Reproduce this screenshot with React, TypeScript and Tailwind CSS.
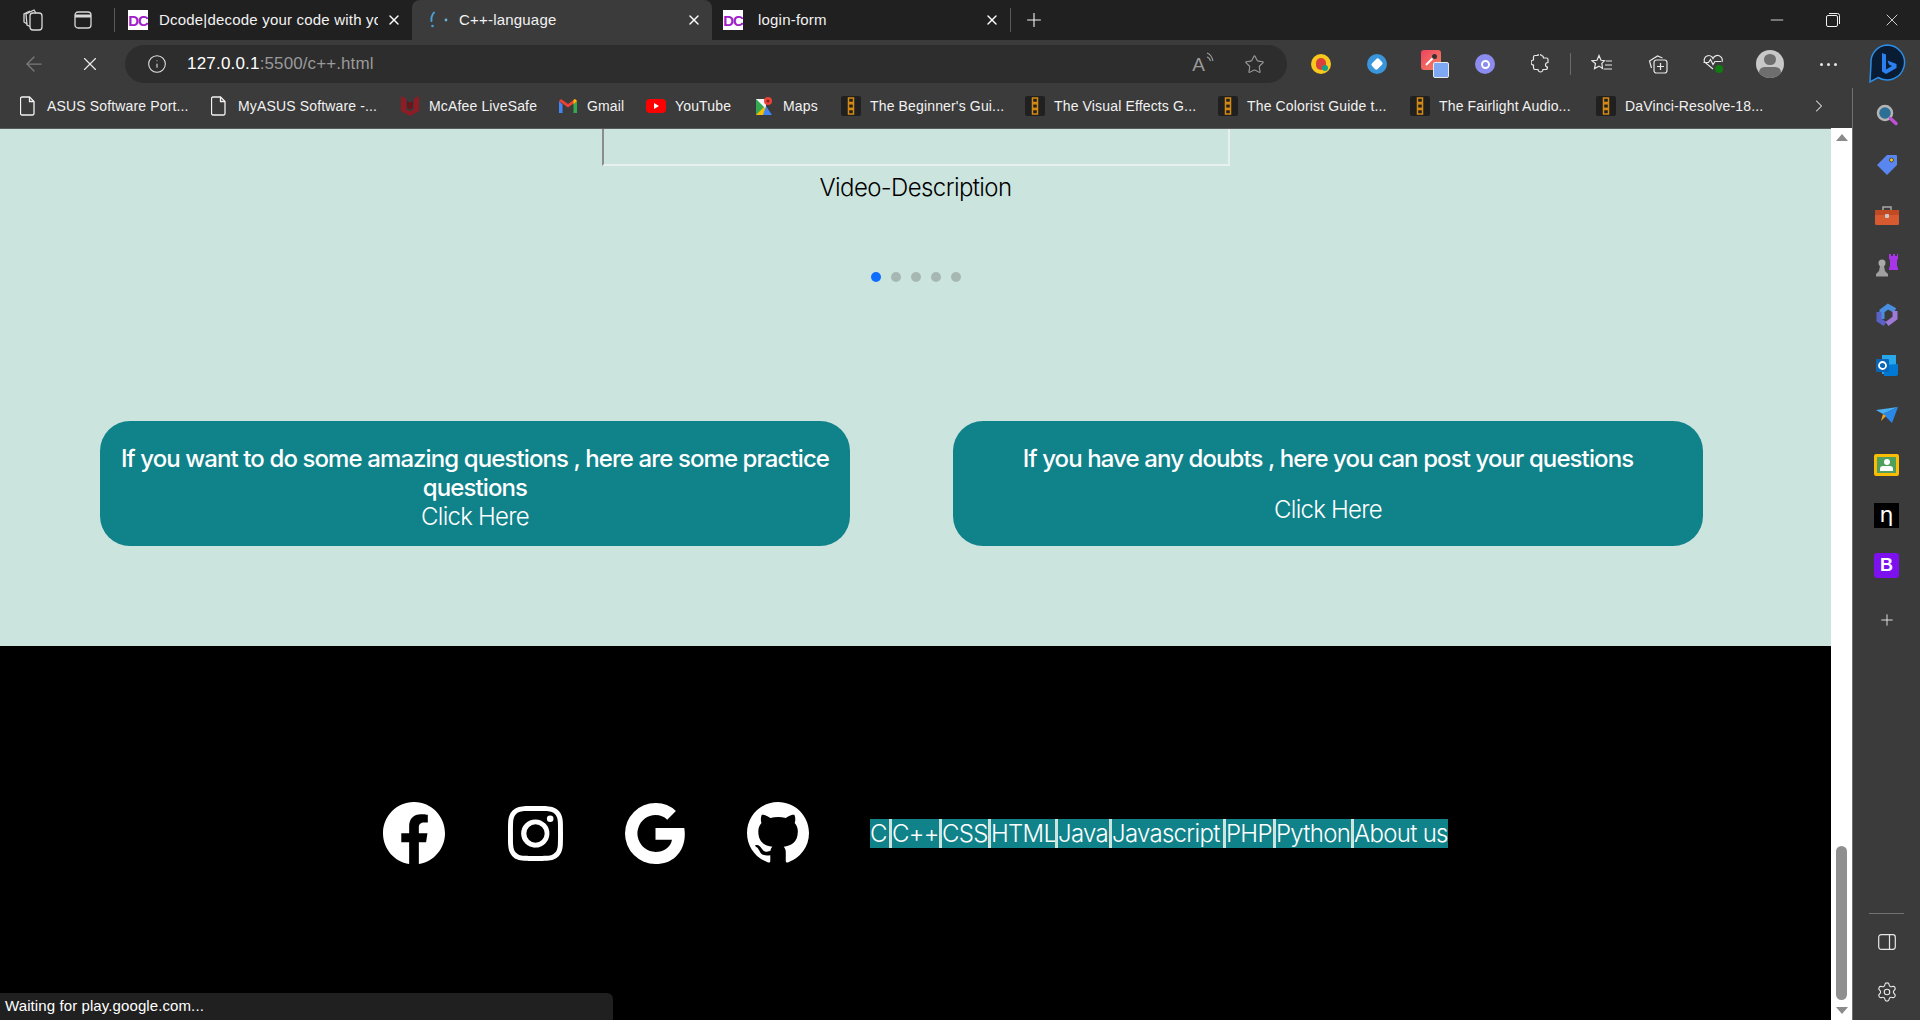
import React from 'react';
import { ArrowLeft, Info, Minus, Plus, Settings, Star, X, ChevronRight } from 'lucide-react';
import { BsFacebook, BsGithub, BsGoogle, BsInstagram } from 'react-icons/bs';

const uiFont = "font-['Liberation_Sans',Arial,sans-serif]";
const pageFont = "font-['Inter',sans-serif]";

const DcIcon = () => (
  <div className="w-5 h-5 bg-white flex items-center justify-center overflow-hidden shrink-0">
    <span className="text-[#a020c8] text-[15px] font-bold leading-none tracking-[-1px]">DC</span>
  </div>
);

const SpinnerIcon = () => (
  <svg width="20" height="20" viewBox="0 0 20 20" className="shrink-0">
    <path d="M6 2.500 C4 5 3 8 3.500 11" stroke="#4a9fd4" strokeWidth="2" fill="none" strokeLinecap="round" />
    <circle cx="4.500" cy="16" r="1.300" fill="#4a9fd4" />
    <circle cx="18" cy="10" r="1.400" fill="#6cb2dc" />
  </svg>
);

const DocIcon = () => (
  <svg width="16" height="20" viewBox="0 0 16 20" fill="none" stroke="#f2f2f2" strokeWidth="1.300">
    <path d="M2 1h7.500l4.500 4.500v12a1.500 1.500 0 0 1-1.500 1.500h-10.500a1.500 1.500 0 0 1-1.500-1.500v-15a1.500 1.500 0 0 1 1.500-1.500z" />
    <path d="M9.500 1v4.500h4.500" />
  </svg>
);

const McafeeIcon = () => (
  <svg width="20" height="22" viewBox="0 0 20 22">
    <path d="M1 1l5 2.500v11l4 2 4-2v-11l5-2.500v15l-9 5-9-5z" fill="#8e1c24" />
    <path d="M7 6l3 1.500 3-1.500v7l-3 1.500-3-1.500z" fill="#6a141b" />
  </svg>
);

const GmailIcon = () => (
  <svg width="20" height="16" viewBox="0 0 20 16">
    <path d="M1 3v12h3.500V6.500z" fill="#4285f4" />
    <path d="M19 3v12h-3.500V6.500z" fill="#34a853" />
    <path d="M1 3l9 6.500L19 3l-2-2-7 5-7-5z" fill="#ea4335" />
    <path d="M15.500 6.500L19 3l-2-2-1.500 1z" fill="#fbbc04" />
  </svg>
);

const YoutubeIcon = () => (
  <svg width="20" height="14" viewBox="0 0 20 14">
    <rect width="20" height="14" rx="4" fill="#f00" />
    <path d="M8 4l5 3-5 3z" fill="#fff" />
  </svg>
);

const MapsIcon = () => (
  <svg width="18" height="20" viewBox="0 0 18 20">
    <path d="M1 3h10v16H1z" fill="#34a853" />
    <path d="M1 19L11 9v10z" fill="#fbbc04" />
    <path d="M1 3l10 10V3z" fill="#f4f4f4" />
    <path d="M11 10l6 9H8z" fill="#4285f4" />
    <circle cx="13" cy="5" r="4" fill="#ea4335" />
    <circle cx="13" cy="5" r="1.500" fill="#8e1c24" />
  </svg>
);

const ResolveIcon = () => (
  <svg width="20" height="20" viewBox="0 0 20 20" className="shrink-0">
    <rect width="20" height="20" rx="2" fill="#202020" />
    <g fill="none" stroke="#d58a14" strokeWidth="1.500">
      <rect x="7.500" y="2" width="5" height="4.500" />
      <rect x="7.500" y="7.800" width="5" height="4.500" />
      <rect x="7.500" y="13.500" width="5" height="4.500" />
    </g>
  </svg>
);

const bookmarks = [
  { label: 'ASUS Software Port...', icon: <DocIcon />, box: 'w-[191px]' },
  { label: 'MyASUS Software -...', icon: <DocIcon />, box: 'w-[191px]' },
  { label: 'McAfee LiveSafe', icon: <McafeeIcon />, box: 'w-[158px]' },
  { label: 'Gmail', icon: <GmailIcon />, box: 'w-[88px]' },
  { label: 'YouTube', icon: <YoutubeIcon />, box: 'w-[108px]' },
  { label: 'Maps', icon: <MapsIcon />, box: 'w-[87px]' },
  { label: "The Beginner's Gui...", icon: <ResolveIcon />, box: 'w-[184px]' },
  { label: 'The Visual Effects G...', icon: <ResolveIcon />, box: 'w-[193px]' },
  { label: 'The Colorist Guide t...', icon: <ResolveIcon />, box: 'w-[192px]' },
  { label: 'The Fairlight Audio...', icon: <ResolveIcon />, box: 'w-[186px]' },
  { label: 'DaVinci-Resolve-18...', icon: <ResolveIcon />, box: 'w-[213px]' },
];

const footerLinks = [
  { label: 'C', box: 'w-[19px]' },
  { label: 'C++', box: 'w-[50px]' },
  { label: 'CSS', box: 'w-[49px]' },
  { label: 'HTML', box: 'w-[67px]' },
  { label: 'Java', box: 'w-[54px]' },
  { label: 'Javascript', box: 'w-[114px]' },
  { label: 'PHP', box: 'w-[50px]' },
  { label: 'Python', box: 'w-[78px]' },
  { label: 'About us', box: 'w-[97px]' },
];

const Tab = ({ title, icon, active, box, titleGap = 'ml-[11px]' }: { title: string; icon: React.ReactNode; active?: boolean; box: string; titleGap?: string }) => (
  <div className={`${box} h-[40px] flex items-center shrink-0 relative ${active ? 'bg-[#3b3b3b] rounded-t-lg' : ''}`}>
    {icon}
    <span className={`${titleGap} text-[15px] tracking-[0.2px] text-[#f2f2f2] whitespace-nowrap overflow-hidden w-[219px]`}>{title}</span>
    <X size={16} color="#ffffff" className="absolute right-[10px] top-[12px]" />
  </div>
);

const SidebarIcons = () => (
  <div className="w-[68px] shrink-0 bg-[#3b3b3b] border-l border-[#707070] flex flex-col items-center pt-[2px]">
    <div className="h-[50px] flex items-center justify-center">
      <svg width="24" height="24" viewBox="0 0 24 24">
        <circle cx="10" cy="10" r="7" fill="#2b6e96" stroke="#b4b4b4" strokeWidth="2.500" />
        <path d="M15.500 15.500L21 20.500" stroke="#c34fd8" strokeWidth="3.500" strokeLinecap="round" />
      </svg>
    </div>
    <div className="h-[50px] flex items-center justify-center">
      <svg width="22" height="22" viewBox="0 0 22 22">
        <path d="M11 1h9a1 1 0 0 1 1 1v9L11 21 1 11z" fill="#5a86f0" />
        <circle cx="15.500" cy="6" r="2" fill="#f0c818" stroke="#333" strokeWidth=".8" />
      </svg>
    </div>
    <div className="h-[50px] flex items-center justify-center">
      <svg width="24" height="20" viewBox="0 0 24 20">
        <path d="M8 5V2h8v3" fill="none" stroke="#a8a8a8" strokeWidth="1.500" />
        <rect y="5" width="24" height="15" rx="1.500" fill="#d85a30" />
        <rect y="5" width="24" height="5" fill="#c24a22" />
        <rect x="10" y="9" width="4" height="4" rx="1" fill="#c8c8c8" />
      </svg>
    </div>
    <div className="h-[50px] flex items-center justify-center">
      <svg width="24" height="24" viewBox="0 0 24 24">
        <path d="M14 1h2v2h2V1h2v2h2V1h1v5l-1 1v6l1 2v2H14v-2l1-2V7l-1-1z" fill="#a835e8" />
        <circle cx="7" cy="10" r="3.500" fill="#a8a8a8" />
        <path d="M5 13h4l1 5 3 3v2.500H1V21l3-3z" fill="#a0a0a0" />
      </svg>
    </div>
    <div className="h-[50px] flex items-center justify-center">
      <svg width="22" height="24" viewBox="0 0 22 24" fill="none" strokeWidth="5">
        <path d="M6 16V8l6-4.500 7 4" stroke="#4a8ee0" />
        <path d="M3 9v8l6 4" stroke="#5a62c8" />
        <path d="M19 8v7l-8 6" stroke="#a078d8" />
      </svg>
    </div>
    <div className="h-[50px] flex items-center justify-center">
      <svg width="22" height="22" viewBox="0 0 22 22">
        <rect x="6" y="1" width="14" height="19" fill="#28a8ea" />
        <path d="M8 11l14-1v10a2 2 0 0 1-2 2H8z" fill="#0078d4" />
        <rect y="5" width="13" height="13" rx="1" fill="#0a64b8" />
        <circle cx="6.500" cy="11.500" r="3.500" fill="none" stroke="#fff" strokeWidth="1.800" />
      </svg>
    </div>
    <div className="h-[50px] flex items-center justify-center">
      <svg width="22" height="16" viewBox="0 0 22 16">
        <path d="M0 3l22-3-15 7z" fill="#4ab0f5" />
        <path d="M7 7L22 0l-6 16z" fill="#2a88e8" />
        <path d="M5 14l2-7 3 2z" fill="#f0a020" />
      </svg>
    </div>
    <div className="h-[50px] flex items-center justify-center">
      <div className="w-[25px] h-[22px] bg-[#4ea05c] border-[3px] border-[#fbbc04] rounded-[2px] flex flex-col items-center justify-center">
        <div className="w-[6px] h-[6px] rounded-full bg-white" />
        <div className="w-[13px] h-[5px] rounded-t-[3px] bg-white mt-[1px]" />
      </div>
    </div>
    <div className="h-[50px] flex items-center justify-center">
      <div className="w-[25px] h-[25px] bg-black flex items-center justify-center">
        <span className="text-white text-[22px] leading-none font-['DejaVu_Sans',sans-serif]">η</span>
      </div>
    </div>
    <div className="h-[50px] flex items-center justify-center">
      <div className="w-[25px] h-[25px] bg-[#7c10ee] rounded-[3px] flex items-center justify-center">
        <span className="text-white text-[18px] font-bold leading-none">B</span>
      </div>
    </div>
    <div className="h-[60px] flex items-center justify-center">
      <Plus size={18} color="#e8e8e8" strokeWidth={1.25} />
    </div>
    <div className="flex-1" />
    <div className="w-[35px] h-px bg-[#707070] mb-[20px]" />
    <svg width="18" height="16" viewBox="0 0 18 16" fill="none" stroke="#e8e8e8" strokeWidth="1.200" className="mb-[31px]">
      <rect x=".7" y=".7" width="16.600" height="14.600" rx="2.500" />
      <path d="M11.500 .7v14.600" />
    </svg>
    <Settings size={22} color="#e8e8e8" strokeWidth={1.25} className="mb-[17px]" />
  </div>
);

const App = () => {
  return (
    <div className={`w-[1920px] h-[1020px] flex flex-col overflow-hidden relative bg-[#202020] ${uiFont}`}>
      {/* tab strip */}
      <div className="h-[40px] flex items-center bg-[#202020] shrink-0">
        <div className="w-[114px] flex items-center shrink-0 pl-[22px]">
          <svg width="22" height="24" viewBox="0 0 22 24" fill="none" stroke="#d8d8d8" strokeWidth="1.300">
            <rect x="8" y="5" width="12" height="17" rx="3" />
            <path d="M8 18.500l-3-1.500-1-11 8-4 2 3" />
            <path d="M5 16L2 14 2 6l6-3" />
          </svg>
          <svg width="18" height="18" viewBox="0 0 18 18" fill="none" stroke="#d8d8d8" strokeWidth="1.300" className="ml-[30px]">
            <rect x="1" y="1" width="16" height="16" rx="3" />
            <path d="M1 5h16" strokeWidth="3" />
          </svg>
        </div>
        <div className="w-px h-[24px] bg-[#5a5a5a]" />
        <Tab box="w-[297px] pl-[13px]" title="Dcode|decode your code with yo" icon={<DcIcon />} />
        <Tab box="w-[300px] pl-[16px]" title="C++-language" icon={<SpinnerIcon />} active />
        <Tab box="w-[298px] pl-[11px]" titleGap="ml-[15px]" title="login-form" icon={<DcIcon />} />
        <div className="w-px h-[24px] bg-[#5a5a5a]" />
        <Plus size={22} color="#f0f0f0" strokeWidth={1.25} className="ml-[12px]" />
        <div className="flex-1" />
        <Minus size={20} color="#f0f0f0" strokeWidth={1} className="mr-[39px]" />
        <svg width="14" height="14" viewBox="0 0 14 14" fill="none" stroke="#f0f0f0" strokeWidth="1" className="mr-[42px]">
          <rect x=".5" y="2.500" width="11" height="11" rx="1.500" />
          <path d="M3 .5h8.500a2 2 0 0 1 2 2V11" />
        </svg>
        <X size={20} color="#f0f0f0" strokeWidth={1} className="mr-[18px]" />
      </div>

      {/* toolbar */}
      <div className="h-[48px] flex items-center bg-[#3b3b3b] shrink-0 relative">
        <ArrowLeft size={24} color="#7b7b7b" strokeWidth={1.25} className="ml-[22px]" />
        <X size={22} color="#ececec" strokeWidth={1.25} className="ml-[33px]" />
        <div className="ml-[24px] w-[1162px] h-[38px] rounded-full bg-[#2d2d2d] flex items-center">
          <Info size={20} color="#e8e8e8" strokeWidth={1.25} className="ml-[22px]" />
          <span className="ml-[20px] text-[17px] tracking-[0.2px] text-[#ffffff]">127.0.0.1</span>
          <span className="text-[17px] tracking-[0.1px] text-[#9a9a9a]">:5500/c++.html</span>
          <div className="flex-1" />
          <span className="text-[#9a9a9a] text-[19px] leading-none mr-[1px]">A</span>
          <svg width="8" height="12" viewBox="0 0 8 12" fill="none" stroke="#9a9a9a" strokeWidth="1.100" className="mb-[12px] mr-[30px]">
            <path d="M1 1c3 1 5 4 6 8M1 5c2 .5 3 2 3.500 4" />
          </svg>
          <Star size={21} color="#9a9a9a" strokeWidth={1.25} className="mr-[22px]" />
        </div>
        <div className="ml-[24px] w-[20px] h-[20px] rounded-full bg-[#f8c81c] flex items-center justify-center relative">
          <div className="w-[10px] h-[12px] rounded-full bg-[#d8423c]" />
          <div className="absolute right-[3px] bottom-[3px] w-[6px] h-[6px] rounded-full bg-[#12a08a]" />
        </div>
        <div className="ml-[36px] w-[20px] h-[20px] rounded-full bg-[#3a96dc] flex items-center justify-center">
          <div className="w-[8px] h-[10px] rotate-45 bg-white rounded-[2px]" />
        </div>
        <div className="ml-[34px] w-[28px] h-[28px] relative">
          <div className="w-[20px] h-[20px] rounded-[3px] bg-gradient-to-br from-[#f04060] to-[#f08060]" />
          <svg width="14" height="14" viewBox="0 0 14 14" className="absolute left-[3px] top-[3px]">
            <path d="M2 12L10 4" stroke="#fff" strokeWidth="2" />
            <circle cx="10.500" cy="3.500" r="2.500" fill="#333" />
          </svg>
          <div className="absolute right-[0px] bottom-[0px] w-[16px] h-[16px] rounded-[2px] bg-[#7ea8f4] border border-[#e8e8e8]" />
        </div>
        <div className="ml-[26px] w-[20px] h-[20px] rounded-full bg-[#8c8cf0] flex items-center justify-center">
          <div className="w-[9px] h-[9px] rounded-full border-2 border-white" />
        </div>
        <svg width="20" height="20" viewBox="0 0 20 20" fill="none" stroke="#e8e8e8" strokeWidth="1.200" className="ml-[36px]">
          <path d="M10 1.500c1.500 0 2.500 1 2.500 2.500h3c1 0 1.500.5 1.500 1.500v3c-1.500 0-2.500 1-2.500 2.300s1 2.200 2 2.200c0 1.500-.5 2.500-1.500 2.500h-3c0 1-1 2.500-2.500 2.500s-2.500-1.500-2.500-2.500h-3c-1 0-1.500-1-1.500-2v-2.500c-1.500 0-2.500-1-2.500-2.500s1-2.500 2.500-2.500v-3c0-1 .5-1.500 1.500-1.500h3c0-1.500 1-2.500 2.500-2.500z" />
        </svg>
        <div className="ml-[19px] w-px h-[22px] bg-[#6a6a6a]" />
        <svg width="22" height="20" viewBox="0 0 22 20" fill="none" stroke="#e8e8e8" strokeWidth="1.200" className="ml-[20px]">
          <path d="M8 1.500l2 4.800 3.500.4-2.700 2.700.8 5-3.600-2.300L3.500 14.500l1-5L1 6.700l5-.4z" />
          <path d="M15 7h6M14 11h7M13 15h8" />
        </svg>
        <svg width="20" height="20" viewBox="0 0 20 20" fill="none" stroke="#e8e8e8" strokeWidth="1.200" className="ml-[35px]">
          <rect x="6" y="6" width="13" height="13" rx="2.500" />
          <path d="M12.500 9v7M9 12.500h7" />
          <path d="M3.500 14L1.500 7l8-5 5 2" />
        </svg>
        <svg width="22" height="20" viewBox="0 0 22 20" fill="none" stroke="#e8e8e8" strokeWidth="1.200" className="ml-[34px] relative">
          <path d="M11 15L2.500 8a4.500 4.500 0 0 1 8.500-3.500A4.500 4.500 0 0 1 20 8" />
          <path d="M1.500 8.500h5l2-3 2.500 5 2-3h6" />
          <circle cx="17" cy="15" r="4" fill="#107c10" stroke="none" />
        </svg>
        <div className="ml-[32px] w-[28px] h-[28px] rounded-full bg-[#c8c8c8] flex flex-col items-center overflow-hidden">
          <div className="w-[12px] h-[12px] rounded-full bg-[#6e6e6e] mt-[4px]" />
          <div className="w-[22px] h-[12px] rounded-full bg-[#6e6e6e] mt-[2px]" />
        </div>
        <div className="ml-[36px] flex gap-[4px]">
          <div className="w-[3px] h-[3px] rounded-full bg-[#e8e8e8]" />
          <div className="w-[3px] h-[3px] rounded-full bg-[#e8e8e8]" />
          <div className="w-[3px] h-[3px] rounded-full bg-[#e8e8e8]" />
        </div>
        <svg width="38" height="40" viewBox="0 0 38 40" className="ml-[31px]">
          <path d="M19 1a17.500 17.500 0 1 1-9 32.500L2 38l1-19A17 17 0 0 1 19 1z" fill="#0a1c34" stroke="#2a8ee8" strokeWidth="1.500" />
          <path d="M14 9l4 1.500v15l6-3.500-3-1.500-1.500-4 9 3.500v4l-10.500 6-4-2.500z" fill="#2a80f0" />
        </svg>
      </div>

      {/* bookmarks + page + sidebar */}
      <div className="flex-1 flex min-h-0">
        <div className="flex-1 flex flex-col min-w-0">
          <div className="h-[40px] flex items-center bg-[#3b3b3b] shrink-0 pb-[4px] pl-[18px]">
            {bookmarks.map(b => (
              <div key={b.label} className={`${b.box} flex items-center gap-[9px] shrink-0`}>
                <div className="w-[20px] flex justify-center">{b.icon}</div>
                <span className="text-[14px] tracking-[0.15px] text-[#f2f2f2] whitespace-nowrap">{b.label}</span>
              </div>
            ))}
            <ChevronRight size={20} color="#e8e8e8" strokeWidth={1.25} />
          </div>

          <div className="flex-1 flex min-h-0">
            <main className={`flex-1 min-w-0 flex flex-col ${pageFont}`}>
              <section className="h-[518px] bg-[#cce4de] flex flex-col items-center shrink-0 border-t border-[#5a5a5a]">
                <div className="w-[628px] h-[37px] border-b-2 border-r-2 border-l-2 border-b-[#e8f0ee] border-r-[#e8f0ee] border-l-[#8c8c8c] shrink-0" />
                <p className="mt-[7px] text-[24px] leading-[29px] font-light text-black tracking-[-0.6px]">Video-Description</p>
                <div className="mt-[70px] flex gap-[10px]">
                  <div className="w-[10px] h-[10px] rounded-full bg-[#0d6efd]" />
                  <div className="w-[10px] h-[10px] rounded-full bg-[#a7b8b3]" />
                  <div className="w-[10px] h-[10px] rounded-full bg-[#a7b8b3]" />
                  <div className="w-[10px] h-[10px] rounded-full bg-[#a7b8b3]" />
                  <div className="w-[10px] h-[10px] rounded-full bg-[#a7b8b3]" />
                </div>
                <div className="mt-[139px] w-full pl-[100px] flex gap-[103px]">
                  <div className="w-[750px] h-[125px] rounded-[30px] bg-[#10828a] text-white text-center px-[16px] pt-[23px]">
                    <h3 className="text-[24px] leading-[29px] font-medium tracking-[-0.9px]">
                      If you want to do some amazing questions , here are some practice questions
                    </h3>
                    <p className="text-[24px] leading-[29px] font-light tracking-[-0.75px]">Click Here</p>
                  </div>
                  <div className="w-[750px] h-[125px] rounded-[30px] bg-[#10828a] text-white text-center px-[16px] pt-[23px]">
                    <h3 className="text-[24px] leading-[29px] font-medium tracking-[-0.9px]">
                      If you have any doubts , here you can post your questions
                    </h3>
                    <p className="mt-[22px] text-[24px] leading-[29px] font-light tracking-[-0.75px]">Click Here</p>
                  </div>
                </div>
              </section>

              <footer className="flex-1 bg-black flex items-center pl-[383px]">
                <BsFacebook size={62} color="#ffffff" />
                <BsInstagram size={55} color="#ffffff" className="ml-[63px]" />
                <BsGoogle size={61} color="#ffffff" className="ml-[62px]" />
                <BsGithub size={62} color="#ffffff" className="ml-[61px]" />
                <nav className="ml-[61px] h-[29px] flex bg-[#10828a]">
                  {footerLinks.map((link, i) => (
                    <a
                      key={link.label}
                      className={`${link.box} ${i > 0 ? 'border-l-[3px] border-[#cce4de]' : ''} text-[24px] leading-[29px] font-light text-white tracking-[-0.7px] whitespace-nowrap overflow-hidden shrink-0`}
                    >
                      {link.label}
                    </a>
                  ))}
                </nav>
              </footer>
            </main>

            {/* page scrollbar */}
            <div className="w-[21px] shrink-0 bg-white flex flex-col items-center">
              <div className="mt-[6px] w-0 h-0 border-l-[6px] border-r-[6px] border-b-[7px] border-l-transparent border-r-transparent border-b-[#8a8a8a]" />
              <div className="flex-1" />
              <div className="w-[11px] h-[154px] rounded-full bg-[#8f8f8f]" />
              <div className="mt-[7px] mb-[6px] w-0 h-0 border-l-[6px] border-r-[6px] border-t-[7px] border-l-transparent border-r-transparent border-t-[#8a8a8a]" />
            </div>
          </div>
        </div>

        <SidebarIcons />
      </div>

      {/* loading status bubble */}
      <div className="absolute left-0 bottom-0 w-[613px] h-[27px] bg-[#202020] rounded-tr-md flex items-center pl-[5px]">
        <span className="text-[15px] tracking-[0.1px] text-white">Waiting for play.google.com...</span>
      </div>
    </div>
  );
};

export default App;
